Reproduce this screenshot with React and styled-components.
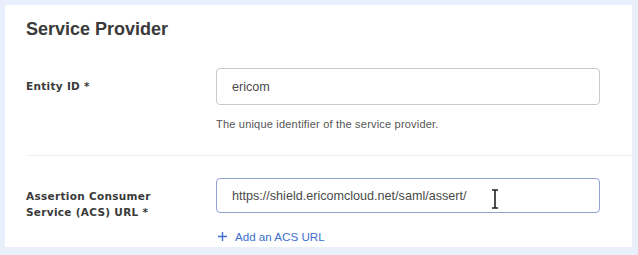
import React from "react";
import styled, { createGlobalStyle } from "styled-components";

const Global = createGlobalStyle`
  html, body { margin: 0; padding: 0; background: #e9effb; overflow: hidden; }
  body { font-family: "Liberation Sans", Arial, sans-serif; }
  *, *::before, *::after { box-sizing: border-box; }
`;

const Page = styled.div`
  width: 638px;
  height: 255px;
  padding: 5px 6px 8px 5px;
  background: #e9effb;
`;

const Card = styled.section`
  background: #ffffff;
  width: 627px;
  height: 242px;
  display: flex;
  flex-direction: column;
  padding-left: 21px;
`;

const Title = styled.h2`
  margin: 0;
  padding-top: 14px;
  height: 48px;
  font-size: 18px;
  line-height: 21px;
  font-weight: 700;
  color: #3a3a3a;
`;

const Row = styled.div`
  display: grid;
  grid-template-columns: 190px 384px;
  padding-top: ${(p) => p.$top}px;
  padding-bottom: ${(p) => p.$bottom}px;
`;

const Label = styled.label`
  font-family: "DejaVu Sans", Verdana, sans-serif;
  font-weight: 700;
  font-size: 10.5px;
  letter-spacing: 0.3px;
  line-height: 16px;
  color: #3a3a3a;
  padding-top: ${(p) => p.$top}px;
`;

const Field = styled.div`
  display: flex;
  flex-direction: column;
`;

const InputBox = styled.div`
  position: relative;
  height: ${(p) => p.$h}px;
  border: 1px solid ${(p) => (p.$focus ? "#8ea3cf" : "#c9c9c9")};
  border-radius: 4px;
  display: flex;
  align-items: center;
  padding-left: 15px;
  font-size: 12.6px;
  color: #4a4a4a;
`;

const Help = styled.div`
  font-size: 11px;
  line-height: 12px;
  color: #555;
  margin-top: 13px;
  letter-spacing: 0.2px;
`;

const Divider = styled.hr`
  border: 0;
  border-top: 1px solid #ececec;
  margin: 0;
  margin-left: 1px;
`;

const AddLink = styled.a`
  display: flex;
  align-items: center;
  gap: 8px;
  margin-top: 17px;
  margin-left: 2px;
  font-size: 11.6px;
  line-height: 13px;
  color: #3d6fcf;
  text-decoration: none;
`;

const Cursor = styled.svg`
  position: absolute;
  left: 274px;
  top: 10px;
`;

export default function App() {
  return (
    <Page>
      <Global />
      <Card>
        <Title>Service Provider</Title>
        <Row $top={15} $bottom={25}>
          <Label $top={10}>Entity ID *</Label>
          <Field>
            <InputBox $h={37}>ericom</InputBox>
            <Help>The unique identifier of the service provider.</Help>
          </Field>
        </Row>
        <Divider />
        <Row $top={22} $bottom={0}>
          <Label $top={10}>
            Assertion Consumer
            <br />
            Service (ACS) URL *
          </Label>
          <Field>
            <InputBox $h={35} $focus>
              https://shield.ericomcloud.net/saml/assert/
              <Cursor width="8" height="20" viewBox="0 0 8 20">
                <path d="M1 1h6M4 1v18M1 19h6" stroke="#222" strokeWidth="1.6" fill="none" />
              </Cursor>
            </InputBox>
            <AddLink>
              <svg width="9" height="9" viewBox="0 0 9 9">
                <path d="M4.5 0v9M0 4.5h9" stroke="#3d6fcf" strokeWidth="1.4" />
              </svg>
              Add an ACS URL
            </AddLink>
          </Field>
        </Row>
      </Card>
    </Page>
  );
}
